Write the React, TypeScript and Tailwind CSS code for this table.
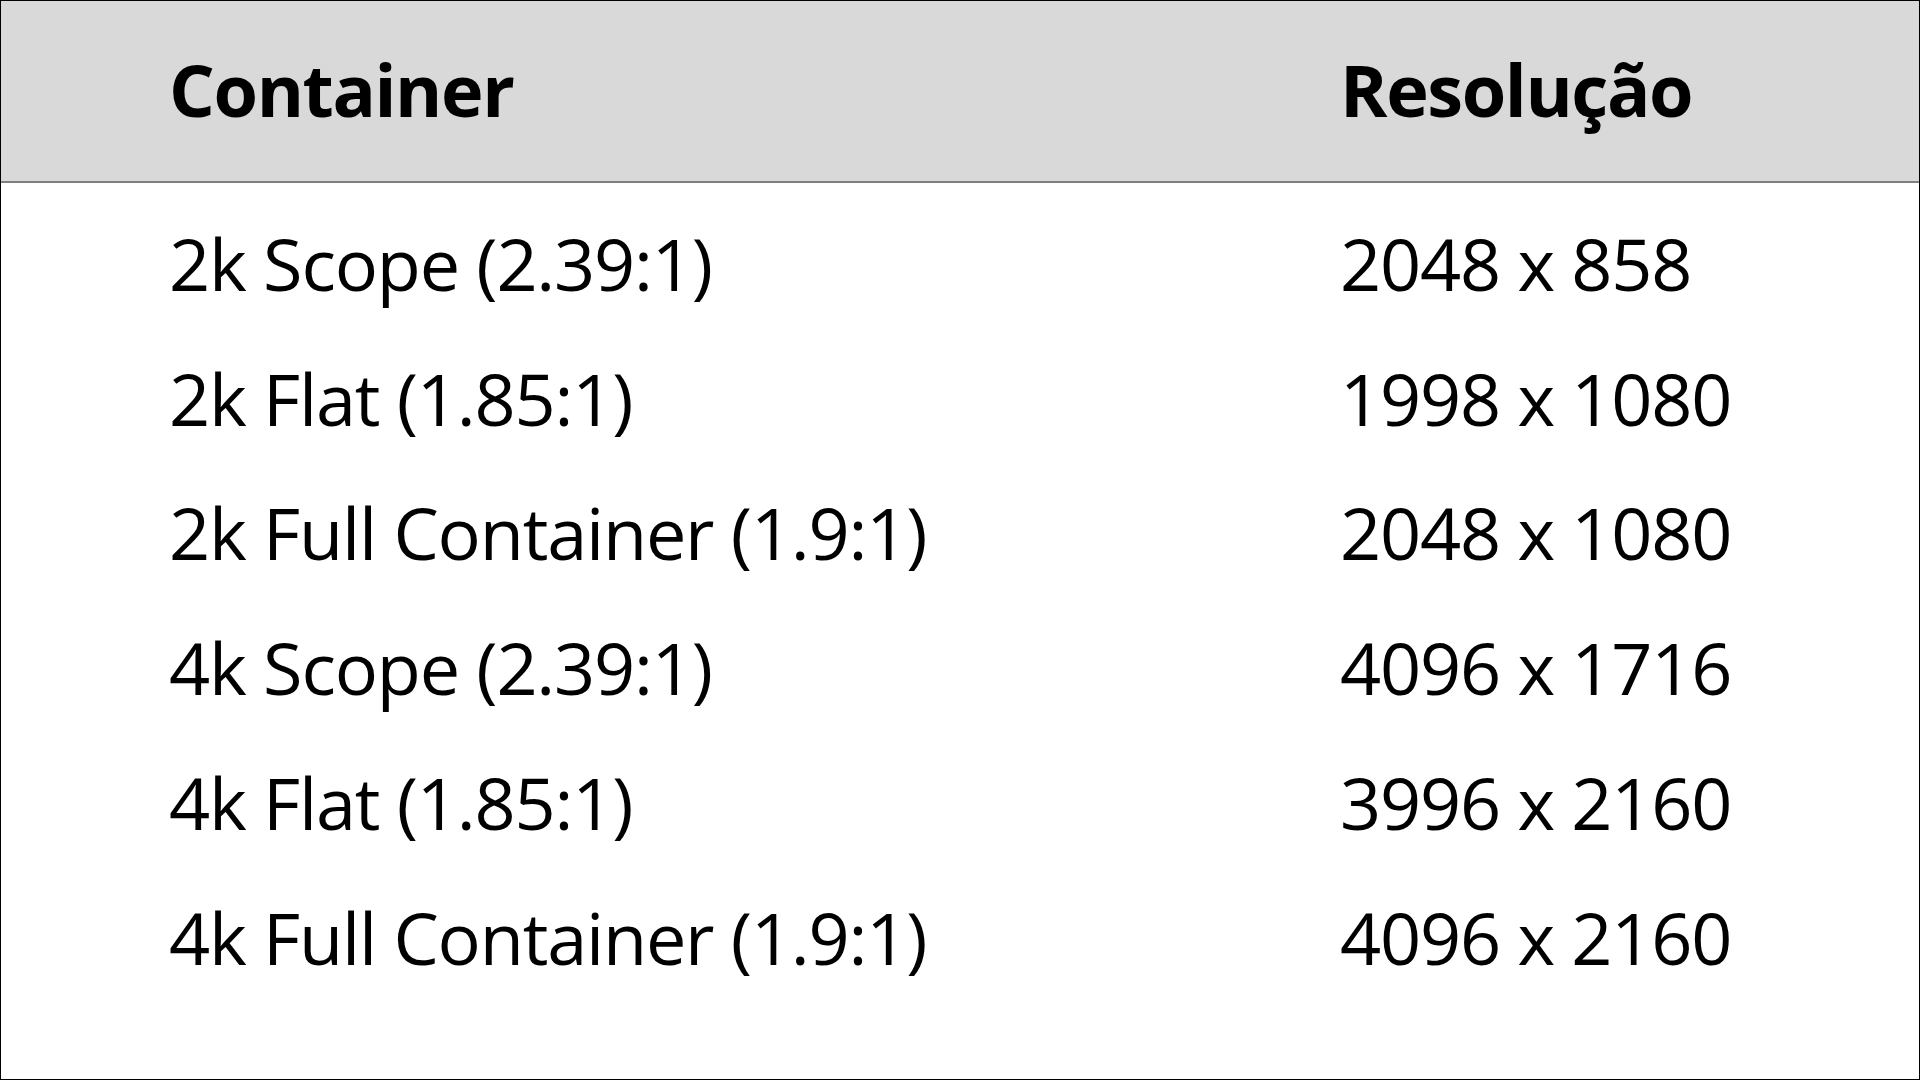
const rows = [
  { container: '2k Scope (2.39:1)', resolution: '2048 x 858' },
  { container: '2k Flat (1.85:1)', resolution: '1998 x 1080' },
  { container: '2k Full Container (1.9:1)', resolution: '2048 x 1080' },
  { container: '4k Scope (2.39:1)', resolution: '4096 x 1716' },
  { container: '4k Flat (1.85:1)', resolution: '3996 x 2160' },
  { container: '4k Full Container (1.9:1)', resolution: '4096 x 2160' },
];

export default function App() {
  return (
    <div
      className="w-[1920px] h-[1080px] border border-black bg-white text-black overflow-hidden"
      style={{ fontFamily: '"Open Sans", "Noto Sans", sans-serif' }}
    >
      <div className="grid grid-cols-[1171px_1fr] pl-[168px] h-[182px] pb-[3px] bg-[#d9d9d9] border-b-2 border-[#7f7f7f] text-[72px] font-bold leading-[177px] tracking-[-1.4px]">
        <div>Container</div>
        <div>Resolução</div>
      </div>

      <div className="pt-[13px]">
        {rows.map((row) => (
          <div
            key={row.container}
            className="grid grid-cols-[1171px_1fr] pl-[168px] text-[72px] leading-[134.7px] tracking-[-1.2px]"
          >
            <div>{row.container}</div>
            <div>{row.resolution}</div>
          </div>
        ))}
      </div>
    </div>
  );
}
